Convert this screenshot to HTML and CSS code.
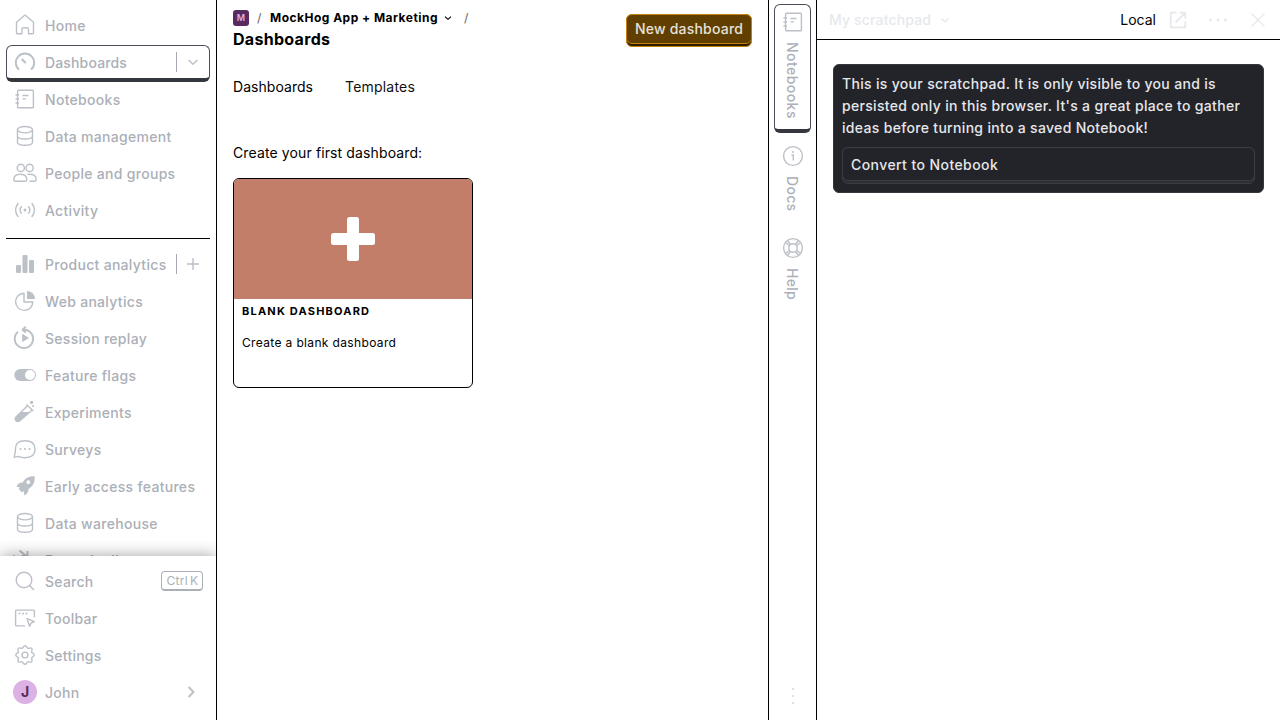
FILE: index.html
```html
<!DOCTYPE html>
<html lang="en">
<head>
<meta charset="utf-8">
<title>Dashboards</title>
<link rel="stylesheet" href="styles.css">
</head>
<body>
<div class="app">
  <nav class="sidebar">
    <div class="nav-scroll">
      <ul class="nav-list">
        <li class="nav-item"><svg class="icon" viewBox="0 0 24 24"><path d="M3.500 9.200 12 2l8.500 7.200v10.600q0 .9-.9.9h-4.100v-4.200q0-1.700-1.700-1.700h-3.200q-1.700 0-1.700 1.700v4.200H4.400q-.9 0-.9-.9z"/></svg><span class="label">Home</span></li>
        <li class="nav-item nav-item-active"><svg class="icon thick" viewBox="0 0 24 24"><path d="M6 19.600A9.200 9.200 0 1 1 18 19.600"/><path class="needle" d="M8.800 9.100l3.900 3.900"/></svg><span class="label">Dashboards</span><span class="side-action divided"><svg class="icon-small" viewBox="0 0 16 16"><path d="M3.500 6 8 10.200 12.500 6"/></svg></span></li>
        <li class="nav-item"><svg class="icon" viewBox="0 0 24 24"><use href="#notebook"/></svg><span class="label">Notebooks</span></li>
        <li class="nav-item"><svg class="icon" viewBox="0 0 24 24"><use href="#database"/></svg><span class="label">Data management</span></li>
        <li class="nav-item"><svg class="icon" viewBox="0 0 24 24"><circle cx="7.800" cy="6.900" r="3.600"/><circle cx="16.600" cy="6.900" r="3.600"/><path d="M.8 18.500q0-5.300 6.500-5.300t6.500 5.300q0 1.700-1.500 1.700h-10q-1.500 0-1.500-1.700zM14.500 13.400q8.700-1 8.700 5.100 0 1.700-1.500 1.700h-5.200"/></svg><span class="label">People and groups</span></li>
        <li class="nav-item"><svg class="icon" viewBox="0 0 24 24"><path d="M8.700 8.200q-3.200 3.800 0 7.600M15.300 8.200q3.200 3.800 0 7.600M5.300 5q-5.500 7 0 14M18.700 5q5.500 7 0 14"/><circle class="solid" cx="12" cy="12" r="1.500"/></svg><span class="label">Activity</span></li>
      </ul>
      <ul class="nav-list nav-products">
        <li class="nav-item"><svg class="icon filled" viewBox="0 0 24 24"><rect x="3" y="13" width="5" height="8" rx="1.300"/><rect x="9.500" y="3" width="5" height="18" rx="1.300"/><rect x="16" y="8" width="5" height="13" rx="1.300"/></svg><span class="label">Product analytics</span><span class="side-action divided"><svg class="icon-small" viewBox="0 0 16 16"><path d="M8 2v12M2 8h12"/></svg></span></li>
        <li class="nav-item"><svg class="icon" viewBox="0 0 24 24"><path d="M11 4.200a8.600 8.600 0 1 0 8.800 8.800H11z"/><path class="solid" d="M14 2v8h8q-.4-7.300-8-8z"/></svg><span class="label">Web analytics</span></li>
        <li class="nav-item"><svg class="icon thick" viewBox="0 0 24 24"><path d="M5 5.800A9.200 9.200 0 1 0 12 3.700h-1.500M12.800.8 9.500 3.700l3.300 2.900"/><path class="solid" d="M9.200 7.700v8.600L16 12z"/></svg><span class="label">Session replay</span></li>
        <li class="nav-item"><svg class="icon filled" viewBox="0 0 24 24"><rect x="1.300" y="6" width="21.700" height="12" rx="6"/><circle class="knob" cx="17" cy="12" r="5"/></svg><span class="label">Feature flags</span></li>
        <li class="nav-item"><svg class="icon" viewBox="0 0 24 24"><path d="M13.500 4.500l6.800 6.600M14.800 5.600 3 17q-1.500 2.200 0 3.800 1.600 1.400 3.800 0L19.200 10"/><path class="solid" d="M8.200 11.900h8.600L7 20.700q-2 1.500-3.900 0-1.700-1.900 0-4z"/><circle class="solid" cx="18.600" cy="2.400" r="1.600"/><circle class="solid" cx="20" cy="5.900" r="1"/></svg><span class="label">Experiments</span></li>
        <li class="nav-item"><svg class="icon" viewBox="0 0 24 24"><path d="M12 3.700c-6.200 0-9.500 2.800-9.500 8.300 0 3-.6 5.500-1.200 7.400-.2.800.3 1 1 .8l3-.8c1.600 1 3.800 1.300 6.700 1.300 6.500 0 10-3 10-8.500S18.500 3.700 12 3.700z"/><path class="dots" d="M7.500 12h.01M12 12h.01M16.500 12h.01"/></svg><span class="label">Surveys</span></li>
        <li class="nav-item"><svg class="icon filled" viewBox="0 0 24 24"><path fill-rule="evenodd" d="M21.700 2.200c-6.500-.3-9.600 2-12.100 6.300-3.300-.2-4.800 1.400-6.300 4.300l3.500.4-1 2 3 3 2-1 .5 4.200c3-1.500 4.300-3.400 4.200-6.400 4.400-2.700 6.500-6.400 6.200-12.800zM15.300 6.300a1.900 1.900 0 1 1 0 3.800 1.900 1.900 0 0 1 0-3.800z"/></svg><span class="label">Early access features</span></li>
        <li class="nav-item"><svg class="icon" viewBox="0 0 24 24"><use href="#database"/></svg><span class="label">Data warehouse</span></li>
        <li class="nav-item"><svg class="icon thick" viewBox="0 0 24 24"><path d="M1 7v5M6.500 2.500l8.500 7M8.500 8h6V3M14 11l7 7"/></svg><span class="label">Data pipelines</span></li>
      </ul>
    </div>
    <ul class="nav-list nav-footer">
      <li class="nav-item"><svg class="icon" viewBox="0 0 24 24"><circle cx="11" cy="11" r="7.800"/><path d="M16.600 16.600l4.400 4.400"/></svg><span class="label">Search</span><kbd class="shortcut"><span>Ctrl</span><span>K</span></kbd></li>
      <li class="nav-item"><svg class="icon" viewBox="0 0 24 24"><path d="M12 19.900H3.400q-.8 0-.8-.8V4.900q0-.8.8-.8h17.200q.8 0 .8.800v6.400M14 12.600l2.600 7.700 1.500-3.200 3.200-1.500z"/><path class="dots" d="M6.500 7.500h.01M10 7.500h.01M13.500 7.500h.01"/></svg><span class="label">Toolbar</span></li>
      <li class="nav-item"><svg class="icon" viewBox="0 0 24 24"><path d="M10.200 4.200Q12 1.200 13.800 4.200 14.700 5.900 16.300 5.100 19.800 4.200 18.900 7.700 18.100 9.300 19.800 10.200 22.800 12 19.800 13.800 18.100 14.700 18.900 16.300 19.800 19.800 16.300 18.900 14.700 18.100 13.800 19.800 12 22.800 10.200 19.800 9.300 18.100 7.700 18.900 4.200 19.800 5.100 16.300 5.900 14.700 4.200 13.800 1.200 12 4.200 10.200 5.900 9.300 5.100 7.700 4.200 4.200 7.700 5.100 9.300 5.900 10.200 4.200z"/><circle cx="12" cy="12" r="2.900"/></svg><span class="label">Settings</span></li>
      <li class="nav-item"><span class="avatar">J</span><span class="label">John</span><span class="side-action"><svg class="icon-small" viewBox="0 0 16 16"><path class="chevron" d="M4.500 3l5 5-5 5"/></svg></span></li>
    </ul>
  </nav>

  <main class="main">
    <header class="topbar">
      <div>
        <div class="crumbs"><span class="project">M</span><i class="slash">/</i><b>MockHog App + Marketing</b><svg class="crumb-arrow" viewBox="0 0 12 12"><path d="M3 4.600 6 7.300l3-2.700"/></svg><i class="slash">/</i></div>
        <h1>Dashboards</h1>
      </div>
      <button class="primary"><span>New dashboard</span></button>
    </header>
    <div class="tabs"><span class="tab-active">Dashboards</span><span>Templates</span></div>
    <p class="intro">Create your first dashboard:</p>
    <article class="template">
      <div class="template-cover"><svg class="plus" viewBox="0 0 44 44"><rect x="16" width="12" height="44" rx="2.500"/><rect y="16" width="44" height="12" rx="2.500"/></svg></div>
      <h5>Blank dashboard</h5>
      <p>Create a blank dashboard</p>
    </article>
  </main>

  <aside class="rail">
    <div class="rail-tab rail-tab-active"><svg class="icon" viewBox="0 0 24 24"><use href="#notebook"/></svg><span>Notebooks</span></div>
    <div class="rail-tab"><svg class="icon" viewBox="0 0 24 24"><circle cx="12" cy="12" r="9.400"/><path d="M10.500 11h1.800v5.500"/><circle class="solid" cx="12" cy="8" r="1"/></svg><span>Docs</span></div>
    <div class="rail-tab"><svg class="icon" viewBox="0 0 24 24"><circle cx="12" cy="12" r="9.400"/><circle cx="12" cy="12" r="4.200"/><path d="M5 6.700l3.500 3M6.700 5l3 3.500M19 6.700l-3.500 3M17.300 5l-3 3.500M5 17.300l3.500-3M6.700 19l3-3.500M19 17.300l-3.500-3M17.300 19l-3-3.500"/></svg><span>Help</span></div>
    <svg class="icon rail-more" viewBox="0 0 24 24"><path class="dots" d="M12 5h.01M12 12h.01M12 19h.01"/></svg>
  </aside>

  <section class="panel">
    <header class="panel-head">
      <span class="panel-title">My scratchpad</span><svg class="icon-small" viewBox="0 0 16 16"><path d="M4.500 6.500 8 9.800l3.500-3.300"/></svg>
      <span class="sync">Local</span>
      <svg class="icon open" viewBox="0 0 24 24"><path d="M10.500 4.700H4.700v14.600h14.600v-5.800M13.500 4.700h5.800v5.800M19 5l-9.500 9.500"/></svg>
      <svg class="icon more" viewBox="0 0 24 24"><path class="dots" d="M4.500 12h.01M12 12h.01M19.500 12h.01"/></svg>
      <svg class="icon close" viewBox="0 0 24 24"><path d="M5.500 5.500l13 13M18.500 5.500l-13 13"/></svg>
    </header>
    <div class="banner">
      <p>This is your scratchpad. It is only visible to you and is persisted only in this browser. It's a great place to gather ideas before turning into a saved Notebook!</p>
      <button class="convert"><span>Convert to Notebook</span></button>
    </div>
  </section>
</div>
<svg class="sprite" aria-hidden="true">
  <symbol id="notebook" viewBox="0 0 24 24"><rect x="4.600" y="3.200" width="15.800" height="17.600" rx=".8"/><path d="M2.500 8h3.500M2.500 12h3.500M2.500 16h3.500M9.500 8.500h6M9.500 11.900h3.500"/></symbol>
  <symbol id="database" viewBox="0 0 24 24"><ellipse cx="12" cy="5.700" rx="7.500" ry="3.200"/><path d="M4.500 5.700v12.600c0 4 15 4 15 0V5.700M4.500 12c0 4 15 4 15 0"/></symbol>
</svg>
</body>
</html>
```
FILE: styles.css
```css
* { box-sizing: border-box; }
body { margin: 0; background: #fff; color: #000; font: 400 14px/20px Inter, "Liberation Sans", sans-serif; }
ul, p, h1, h5 { margin: 0; padding: 0; }
button { font: inherit; padding: 0; text-align: left; white-space: nowrap; }
.app { display: flex; width: 1280px; height: 720px; overflow: hidden; }
.sprite { position: absolute; width: 0; height: 0; }

.icon, .icon-small, .crumb-arrow { flex: none; fill: none; stroke: currentColor; stroke-width: 1.4; stroke-linejoin: round; }
.icon { width: 24px; height: 24px; color: #bcc0c7; }
.icon-small { width: 16px; height: 16px; }
.thick { stroke-width: 1.9; }
.needle { stroke-width: 2.2; }
.solid { fill: currentColor; stroke: none; }
.filled { fill: currentColor; stroke: none; }
.knob { fill: #fff; }
.dots { stroke-width: 2; stroke-linecap: round; }

.sidebar { display: flex; flex-direction: column; width: 217px; border-right: 1px solid #000; color: #abafb7; font-weight: 500; }
.nav-scroll { height: 556px; overflow: hidden; padding-top: 8px; }
.nav-list { list-style: none; padding: 0 6px; }
.nav-products { margin: 8px 6px 0; padding: 8px 0 0; border-top: 1px solid #000; }
.nav-footer { flex: 1; padding-top: 8px; background: #fff; box-shadow: 0 0 15px rgba(0, 0, 0, .38); clip-path: inset(-16px 0 0 0); }
.nav-item { display: flex; align-items: center; gap: 8px; height: 37px; padding: 0 7px 3px; white-space: nowrap; }
.nav-item-active { border: 1px solid #4b4e58; border-bottom: 4px solid #35373e; border-radius: 6px; padding: 0 6px; }
.label { padding-top: 2px; letter-spacing: .3px; }
.nav-item-active .label { letter-spacing: .15px; }
.nav-footer .label { letter-spacing: .25px; }
.side-action { display: flex; align-items: center; height: 20px; margin-left: auto; padding-left: 8px; padding-right: 2px; color: #bcc0c7; }
.divided { border-left: 1px solid #a4a8b1; }
.chevron { stroke-width: 2; }
.nav-item:last-child .side-action { padding-right: 3px; }
.shortcut { display: flex; gap: 2px; height: 20px; margin-left: auto; padding: 0 4px; border: 1px solid #abafb7; border-bottom-width: 2px; border-radius: 4px; font: 400 12px/18px Inter, sans-serif; letter-spacing: .3px; }
.shortcut span:last-child { letter-spacing: 0; }
.avatar { width: 24px; height: 24px; border-radius: 50%; background: #dcb1e3; color: #572b5e; font-weight: 700; line-height: 24px; text-align: center; }

.main { width: 551px; padding: 9px 16px; }
.topbar { display: flex; justify-content: space-between; height: 62px; }
.crumbs { display: flex; align-items: center; height: 18px; font-size: 12px; line-height: 18px; }
.crumbs b { letter-spacing: .48px; }
.project { width: 16px; height: 16px; border-radius: 3px; background: #572b5e; color: #dcb1e3; font-size: 9px; font-weight: 600; line-height: 16px; text-align: center; }
.slash { width: 5px; margin: 0 8px; color: #777; font-style: normal; font-weight: 500; }
.crumb-arrow { width: 12px; height: 12px; margin: 0 2px 0 4px; stroke-width: 1.1; }
h1 { font-size: 16px; line-height: 24px; font-weight: 700; letter-spacing: .3px; }
.primary { width: 126px; height: 33px; margin-top: 5px; border: 1px solid #c4810b; border-radius: 6px; background: #2b1c00; color: #e6e2da; font-weight: 500; letter-spacing: .2px; }
.primary span { display: block; height: 30px; margin: -1px; padding: 0 8px; border: 1px solid #c4810b; border-radius: 6px; background: #613f00; line-height: 28px; }
.tabs { display: flex; gap: 32px; padding-top: 6px; color: #111; letter-spacing: .2px; }
.tab-active { width: 80px; color: #000; letter-spacing: .04px; }
.intro { margin-top: 46px; letter-spacing: .12px; }
.template { width: 240px; height: 210px; margin-top: 15px; border: 1px solid #000; border-radius: 6px; overflow: hidden; }
.template-cover { display: flex; height: 120px; align-items: center; justify-content: center; background: #c27e68; }
.plus { width: 44px; height: 44px; fill: #fff; }
h5 { padding: 4px 8px 0; font-size: 11px; line-height: 16px; letter-spacing: 1.2px; text-transform: uppercase; }
.template p { padding: 15px 8px; font-size: 12px; line-height: 18px; letter-spacing: .35px; }

.rail { display: flex; flex-direction: column; width: 48px; padding: 4px 5px; border-left: 1px solid #000; color: #abafb7; font-weight: 500; }
.rail-tab { display: flex; flex-direction: column; align-items: center; gap: 8px; width: 37px; height: 92px; padding: 11px 0 0; line-height: 20px; letter-spacing: .3px; }
.rail-tab span { writing-mode: vertical-rl; padding-right: 2px; }
.rail-tab-active { height: 129px; padding-top: 5px; border: 1px solid #4b4e58; border-bottom: 4px solid #35373e; border-radius: 6px; letter-spacing: .45px; }
.rail-more { margin: auto auto 8px 7px; color: #e0e1e6; }
.rail-more .dots { stroke-width: 2.6; }

.panel { width: 464px; border-left: 1px solid #000; }
.panel-head { display: flex; align-items: center; height: 40px; padding: 0 10px 0 12px; border-bottom: 1px solid #000; color: #e7e8ec; font-weight: 500; }
.panel-head .icon { color: #e7e8ec; }
.panel-head .icon-small { margin-left: 6px; }
.panel-title { letter-spacing: .15px; }
.sync { margin-left: auto; color: #000; font-weight: 400; }
.open { margin-left: 10px; stroke-width: 1.8; }
.more { margin-left: 16px; }
.more .dots { stroke-width: 3; }
.close { margin-left: 16px; }
.banner { margin: 24px 16px; height: 129px; padding: 8px; border: 1px solid #35373e; border-radius: 6px; background: #232429; color: #e6e7eb; font-weight: 500; line-height: 22px; letter-spacing: .32px; }
.convert { width: 100%; height: 37px; margin-top: 8px; border: 1px solid #3b3d45; border-radius: 6px; background: #2d2e34; color: inherit; letter-spacing: .42px; }
.convert span { display: block; height: 34px; margin: -1px; padding: 0 8px; border: 1px solid #3b3d45; border-radius: 6px; background: #232429; line-height: 33px; }
.primary, .convert { display: flex; flex-direction: column; align-items: stretch; justify-content: flex-start; }
```
